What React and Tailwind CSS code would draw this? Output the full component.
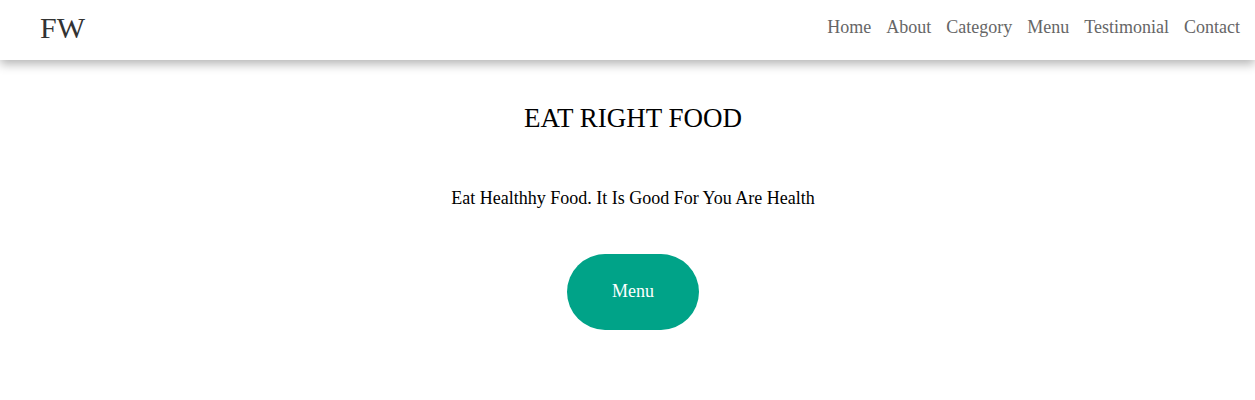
export default function App() {
  const links = ['Home', 'About', 'Category', 'Menu', 'Testimonial', 'Contact'];

  return (
    <div className="min-h-screen bg-white font-['Liberation_Serif',serif]">
      <header className="h-[60px] flex items-center justify-between pl-10 pr-[15px] pb-[5px] bg-white shadow-[0_4px_10px_rgba(0,0,0,0.3)] relative z-10">
        <span className="text-[30px] text-[#333]">FW</span>
        <nav className="flex gap-[15px] text-[18px] text-[#666]">
          {links.map((l) => (
            <a key={l} href="#">{l}</a>
          ))}
        </nav>
      </header>

      <section className="flex flex-col items-center pl-[11px] text-black">
        <h1 className="mt-[38px] text-[27px]">EAT RIGHT FOOD</h1>
        <p className="mt-[46px] text-[18px]">Eat Healthhy Food. It Is Good For You Are Health</p>
        <button className="mt-[42px] w-[132px] h-[76px] rounded-full bg-[#00a388] text-white text-[18px]">
          Menu
        </button>
      </section>
    </div>
  );
}
